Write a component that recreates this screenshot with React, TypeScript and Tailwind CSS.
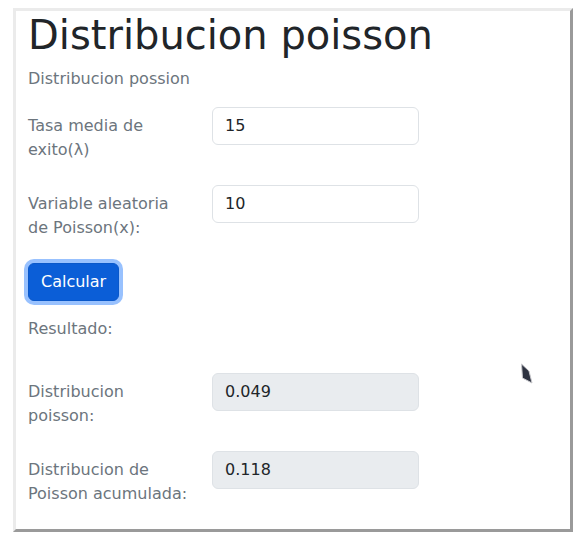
import React from "react";

const fields = [
  { label: "Tasa media de exito(λ)", value: "15", readOnly: false },
  { label: "Variable aleatoria de Poisson(x):", value: "10", readOnly: false },
];

const results = [
  { label: "Distribucion poisson:", value: "0.049" },
  { label: "Distribucion de Poisson acumulada:", value: "0.118" },
];

const Row = ({ label, value, readOnly }: { label: string; value: string; readOnly: boolean }) => (
  <div className="flex items-start gap-6 mb-4">
    <label className="w-40 shrink-0 py-[7px] text-[#6c757d] leading-6">{label}</label>
    <input
      readOnly
      value={value}
      className={`w-[207px] h-[38px] px-3 pb-px rounded-md border border-[#dee2e6] text-[#212529] leading-6 outline-none ${
        readOnly ? "bg-[#e9ecef]" : "bg-white"
      }`}
    />
  </div>
);

const App = () => {
  return (
    <div className="relative min-h-[536px] bg-white pt-2 pl-[13px] pr-[15px] text-base" style={{ fontFamily: "'DejaVu Sans', sans-serif" }}>
      <div className="border-[3px] border-t-[#ebebeb] border-l-[#ebebeb] border-b-[#9a9a9a] border-r-[#9a9a9a] bg-white pl-3 pr-3">
        <h1 className="text-[40px] leading-[48px] text-[#212529] mb-2">Distribucion poisson</h1>
        <p className="text-[#6c757d] leading-6 mb-4">Distribucion possion</p>

        {fields.map((f) => (
          <Row key={f.label} label={f.label} value={f.value} readOnly={false} />
        ))}

        <button className="h-[38px] px-3 rounded-md bg-[#0b5ed7] border border-[#0a58ca] text-white leading-6 shadow-[0_0_0_4px_rgba(49,132,253,0.5)] mb-4">
          Calcular
        </button>

        <p className="text-[#6c757d] leading-6 mb-8">Resultado:</p>

        {results.map((r) => (
          <Row key={r.label} label={r.label} value={r.value} readOnly={true} />
        ))}
      </div>

      {/* mouse pointer left in the screenshot */}
      <svg className="absolute left-[520px] top-[363px]" width="14" height="22" viewBox="0 0 14 22">
        <polygon points="1.5,1 9,8 12,20 2.5,15" fill="#2d3240" stroke="#c8c8cc" strokeWidth="1" />
      </svg>
    </div>
  );
};

export default App;
